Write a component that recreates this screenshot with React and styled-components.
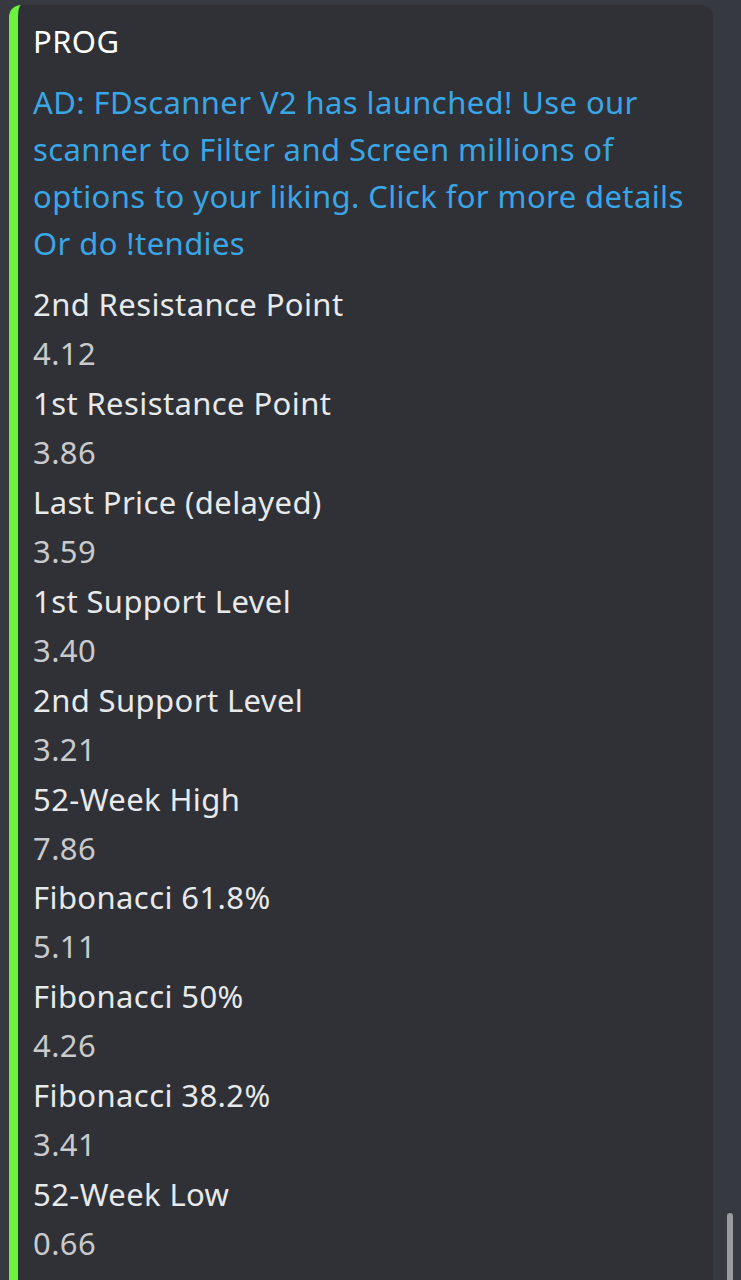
import React from 'react'
import styled, { createGlobalStyle } from 'styled-components'

const GlobalStyle = createGlobalStyle`
  html, body {
    margin: 0;
    padding: 0;
    background: #36393f;
    font-family: "Noto Sans", "Open Sans", sans-serif;
  }
`

const Page = styled.div`
  height: 1280px;
  overflow: hidden;
  position: relative;
  padding: 5px 28px 0 9px;
  box-sizing: border-box;
`

const Embed = styled.div`
  width: 704px;
  min-height: 1400px;
  background: #2f3136;
  border-left: 9px solid #6af23e;
  border-radius: 12px 12px 0 0;
  box-sizing: border-box;
  padding: 13px 20px 0 15px;
  letter-spacing: 0.4px;
`

const Title = styled.div`
  color: #ffffff;
  font-size: 31px;
  line-height: 47px;
  font-weight: 400;
`

const Description = styled.div`
  color: #3aa6e6;
  font-size: 31px;
  line-height: 47px;
  margin: 14px 0 12px;
`

const Field = styled.div`
  display: flex;
  flex-direction: column;
`

const FieldName = styled.div`
  color: #e8e9ea;
  font-size: 31px;
  line-height: 50px;
`

const FieldValue = styled.div`
  color: #c9cacc;
  font-size: 31px;
  line-height: 48.9px;
`

const Scrollbar = styled.div`
  position: absolute;
  left: 727px;
  top: 1213px;
  width: 6px;
  height: 100px;
  border-radius: 3px;
  background: #9a9b9d;
`

const fields = [
  ['2nd Resistance Point', '4.12'],
  ['1st Resistance Point', '3.86'],
  ['Last Price (delayed)', '3.59'],
  ['1st Support Level', '3.40'],
  ['2nd Support Level', '3.21'],
  ['52-Week High', '7.86'],
  ['Fibonacci 61.8%', '5.11'],
  ['Fibonacci 50%', '4.26'],
  ['Fibonacci 38.2%', '3.41'],
  ['52-Week Low', '0.66']
]

export default function App () {
  return (
    <Page>
      <GlobalStyle />
      <Embed>
        <Title>PROG</Title>
        <Description>
          AD: FDscanner V2 has launched! Use our scanner to Filter and Screen millions of options to your liking. Click for more details Or do !tendies
        </Description>
        {fields.map(([name, value]) => (
          <Field key={name}>
            <FieldName>{name}</FieldName>
            <FieldValue>{value}</FieldValue>
          </Field>
        ))}
      </Embed>
      <Scrollbar />
    </Page>
  )
}
